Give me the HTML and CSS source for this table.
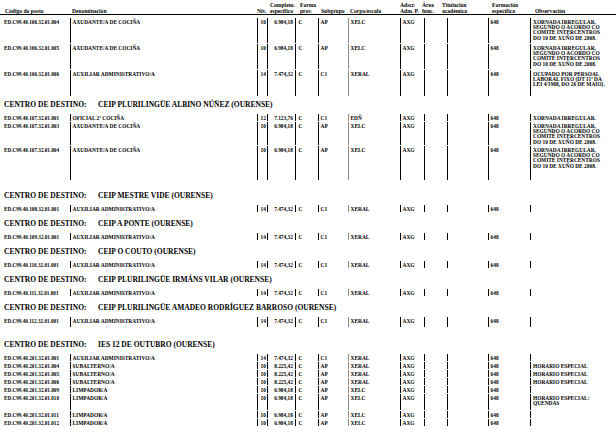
FILE: index.html
```html
<!DOCTYPE html>
<html lang="gl">
<head>
<meta charset="utf-8">
<title>Postos</title>
<link rel="stylesheet" href="styles.css">
</head>
<body>
<div class="page">
  <div class="head">
    <div class="hc hc-code">Código do posto</div>
    <div class="hc">Denominación</div>
    <div class="hc">Niv.</div>
    <div class="hc">Complem.<br>específico</div>
    <div class="hc">Forma<br>prov.</div>
    <div class="hc">Subgrupo</div>
    <div class="hc">Corpo/escala</div>
    <div class="hc">Adscr.<br>Adm. P.</div>
    <div class="hc">Área<br>func.</div>
    <div class="hc">Titulación<br>académica</div>
    <div class="hc">Formación<br>específica</div>
    <div class="hc">Observación</div>
  </div>

  <div class="rows first">
    <div class="row h25">
      <div class="code">ED.C99.40.106.32.01.004</div><div class="c den">AXUDANTE/A DE COCIÑA</div><div class="c niv">10</div><div class="c comp">6.984,18</div><div class="c forma">C</div><div class="c sub">AP</div><div class="c corpo">XELC</div><div class="c">AXG</div><div class="c"></div><div class="c"></div><div class="c">648</div><div class="c obs">XORNADA IRREGULAR,<br>SEGUNDO O ACORDO CO<br>COMITÉ INTERCENTROS<br>DO 10 DE XUÑO DE 2008.</div>
    </div>
    <div class="row h25">
      <div class="code">ED.C99.40.106.32.01.005</div><div class="c den">AXUDANTE/A DE COCIÑA</div><div class="c niv">10</div><div class="c comp">6.984,18</div><div class="c forma">C</div><div class="c sub">AP</div><div class="c corpo">XELC</div><div class="c">AXG</div><div class="c"></div><div class="c"></div><div class="c">648</div><div class="c obs">XORNADA IRREGULAR,<br>SEGUNDO O ACORDO CO<br>COMITÉ INTERCENTROS<br>DO 10 DE XUÑO DE 2008.</div>
    </div>
    <div class="row h26">
      <div class="code">ED.C99.40.106.32.01.006</div><div class="c den">AUXILIAR ADMINISTRATIVO/A</div><div class="c niv">14</div><div class="c comp">7.474,32</div><div class="c forma">C</div><div class="c sub">C1</div><div class="c corpo">XERAL</div><div class="c">AXG</div><div class="c"></div><div class="c"></div><div class="c">648</div><div class="c obs">OCUPADO POR PERSOAL<br>LABORAL FIXO (DT 11ª DA<br>LEI 4/1988, DO 26 DE MAIO).</div>
    </div>
  </div>

  <h2 class="centro mt3"><span class="lbl">CENTRO DE DESTINO:</span>CEIP PLURILINGÜE ALBINO NÚÑEZ (OURENSE)</h2>
  <div class="rows">
    <div class="row h7">
      <div class="code">ED.C99.40.107.32.01.001</div><div class="c den">OFICIAL 2ª COCIÑA</div><div class="c niv">12</div><div class="c comp">7.123,76</div><div class="c forma">C</div><div class="c sub">C1</div><div class="c corpo">EDÑ</div><div class="c">AXG</div><div class="c"></div><div class="c"></div><div class="c">648</div><div class="c obs">XORNADA IRREGULAR.</div>
    </div>
    <div class="row h23">
      <div class="code">ED.C99.40.107.32.01.003</div><div class="c den">AXUDANTE/A DE COCIÑA</div><div class="c niv">10</div><div class="c comp">6.984,18</div><div class="c forma">C</div><div class="c sub">AP</div><div class="c corpo">XELC</div><div class="c">AXG</div><div class="c"></div><div class="c"></div><div class="c">648</div><div class="c obs">XORNADA IRREGULAR,<br>SEGUNDO O ACORDO CO<br>COMITÉ INTERCENTROS<br>DO 10 DE XUÑO DE 2008.</div>
    </div>
    <div class="row h34">
      <div class="code">ED.C99.40.107.32.01.004</div><div class="c den">AXUDANTE/A DE COCIÑA</div><div class="c niv">10</div><div class="c comp">6.984,18</div><div class="c forma">C</div><div class="c sub">AP</div><div class="c corpo">XELC</div><div class="c">AXG</div><div class="c"></div><div class="c"></div><div class="c">648</div><div class="c obs">XORNADA IRREGULAR,<br>SEGUNDO O ACORDO CO<br>COMITÉ INTERCENTROS<br>DO 10 DE XUÑO DE 2008.</div>
    </div>
  </div>

  <h2 class="centro mt10"><span class="lbl">CENTRO DE DESTINO:</span>CEIP MESTRE VIDE (OURENSE)</h2>
  <div class="rows">
    <div class="row h7">
      <div class="code">ED.C99.40.108.32.01.001</div><div class="c den">AUXILIAR ADMINISTRATIVO/A</div><div class="c niv">14</div><div class="c comp">7.474,32</div><div class="c forma">C</div><div class="c sub">C1</div><div class="c corpo">XERAL</div><div class="c">AXG</div><div class="c"></div><div class="c"></div><div class="c">648</div><div class="c obs"></div>
    </div>
  </div>

  <h2 class="centro"><span class="lbl">CENTRO DE DESTINO:</span>CEIP A PONTE (OURENSE)</h2>
  <div class="rows">
    <div class="row h7">
      <div class="code">ED.C99.40.109.32.01.001</div><div class="c den">AUXILIAR ADMINISTRATIVO/A</div><div class="c niv">14</div><div class="c comp">7.474,32</div><div class="c forma">C</div><div class="c sub">C1</div><div class="c corpo">XERAL</div><div class="c">AXG</div><div class="c"></div><div class="c"></div><div class="c">648</div><div class="c obs"></div>
    </div>
  </div>

  <h2 class="centro"><span class="lbl">CENTRO DE DESTINO:</span>CEIP O COUTO (OURENSE)</h2>
  <div class="rows">
    <div class="row h7">
      <div class="code">ED.C99.40.110.32.01.001</div><div class="c den">AUXILIAR ADMINISTRATIVO/A</div><div class="c niv">14</div><div class="c comp">7.474,32</div><div class="c forma">C</div><div class="c sub">C1</div><div class="c corpo">XERAL</div><div class="c">AXG</div><div class="c"></div><div class="c"></div><div class="c">648</div><div class="c obs"></div>
    </div>
  </div>

  <h2 class="centro"><span class="lbl">CENTRO DE DESTINO:</span>CEIP PLURILINGÜE IRMÁNS VILAR (OURENSE)</h2>
  <div class="rows">
    <div class="row h7">
      <div class="code">ED.C99.40.111.32.01.001</div><div class="c den">AUXILIAR ADMINISTRATIVO/A</div><div class="c niv">14</div><div class="c comp">7.474,32</div><div class="c forma">C</div><div class="c sub">C1</div><div class="c corpo">XERAL</div><div class="c">AXG</div><div class="c"></div><div class="c"></div><div class="c">648</div><div class="c obs"></div>
    </div>
  </div>

  <h2 class="centro"><span class="lbl">CENTRO DE DESTINO:</span>CEIP PLURILINGÜE AMADEO RODRÍGUEZ BARROSO (OURENSE)</h2>
  <div class="rows">
    <div class="row h10">
      <div class="code">ED.C99.40.112.32.01.001</div><div class="c den">AUXILIAR ADMINISTRATIVO/A</div><div class="c niv">14</div><div class="c comp">7.474,32</div><div class="c forma">C</div><div class="c sub">C1</div><div class="c corpo">XERAL</div><div class="c">AXG</div><div class="c"></div><div class="c"></div><div class="c">648</div><div class="c obs"></div>
    </div>
  </div>

  <h2 class="centro mt12"><span class="lbl">CENTRO DE DESTINO:</span>IES 12 DE OUTUBRO (OURENSE)</h2>
  <div class="rows">
    <div class="row h7">
      <div class="code">ED.C99.40.201.32.01.001</div><div class="c den">AUXILIAR ADMINISTRATIVO/A</div><div class="c niv">14</div><div class="c comp">7.474,32</div><div class="c forma">C</div><div class="c sub">C1</div><div class="c corpo">XERAL</div><div class="c">AXG</div><div class="c"></div><div class="c"></div><div class="c">648</div><div class="c obs"></div>
    </div>
    <div class="row h7">
      <div class="code">ED.C99.40.201.32.01.004</div><div class="c den">SUBALTERNO/A</div><div class="c niv">10</div><div class="c comp">8.225,42</div><div class="c forma">C</div><div class="c sub">AP</div><div class="c corpo">XERAL</div><div class="c">AXG</div><div class="c"></div><div class="c"></div><div class="c">648</div><div class="c obs">HORARIO ESPECIAL</div>
    </div>
    <div class="row h7">
      <div class="code">ED.C99.40.201.32.01.005</div><div class="c den">SUBALTERNO/A</div><div class="c niv">10</div><div class="c comp">8.225,42</div><div class="c forma">C</div><div class="c sub">AP</div><div class="c corpo">XERAL</div><div class="c">AXG</div><div class="c"></div><div class="c"></div><div class="c">648</div><div class="c obs">HORARIO ESPECIAL</div>
    </div>
    <div class="row h7">
      <div class="code">ED.C99.40.201.32.01.006</div><div class="c den">SUBALTERNO/A</div><div class="c niv">10</div><div class="c comp">8.225,42</div><div class="c forma">C</div><div class="c sub">AP</div><div class="c corpo">XERAL</div><div class="c">AXG</div><div class="c"></div><div class="c"></div><div class="c">648</div><div class="c obs">HORARIO ESPECIAL</div>
    </div>
    <div class="row h7">
      <div class="code">ED.C99.40.201.32.01.009</div><div class="c den">LIMPADOR/A</div><div class="c niv">10</div><div class="c comp">6.984,18</div><div class="c forma">C</div><div class="c sub">AP</div><div class="c corpo">XELC</div><div class="c">AXG</div><div class="c"></div><div class="c"></div><div class="c">648</div><div class="c obs"></div>
    </div>
    <div class="row h16">
      <div class="code">ED.C99.40.201.32.01.010</div><div class="c den">LIMPADOR/A</div><div class="c niv">10</div><div class="c comp">6.984,18</div><div class="c forma">C</div><div class="c sub">AP</div><div class="c corpo">XELC</div><div class="c">AXG</div><div class="c"></div><div class="c"></div><div class="c">648</div><div class="c obs">HORARIO ESPECIAL:<br>QUENDAS</div>
    </div>
    <div class="row h7">
      <div class="code">ED.C99.40.201.32.01.011</div><div class="c den">LIMPADOR/A</div><div class="c niv">10</div><div class="c comp">6.984,18</div><div class="c forma">C</div><div class="c sub">AP</div><div class="c corpo">XELC</div><div class="c">AXG</div><div class="c"></div><div class="c"></div><div class="c">648</div><div class="c obs"></div>
    </div>
    <div class="row h7">
      <div class="code">ED.C99.40.201.32.01.012</div><div class="c den">LIMPADOR/A</div><div class="c niv">10</div><div class="c comp">6.984,18</div><div class="c forma">C</div><div class="c sub">AP</div><div class="c corpo">XELC</div><div class="c">AXG</div><div class="c"></div><div class="c"></div><div class="c">648</div><div class="c obs"></div>
    </div>
  </div>
</div>
</body>
</html>
```
FILE: styles.css
```css
* { box-sizing: border-box; margin: 0; padding: 0; }
html, body { background: #fff; }
body {
  margin: 0;
  color: #000;
  font-family: "Liberation Serif", "DejaVu Serif", "Times New Roman", serif;
  font-weight: bold;
}
.page {
  width: 616px;
  height: 439px;
  overflow: hidden;
  display: flex;
  flex-direction: column;
}
.head {
  flex: none;
  display: grid;
  grid-template-columns: 72px 185px 13px 30px 21px 29px 50px 22px 20px 50px 43px 81px;
  align-items: end;
  height: 15px;
  padding-top: 1px;
  border-bottom: 1px solid #000;
  font-size: 5.6px;
  line-height: 6px;
}
.hc { white-space: nowrap; }
.hc-code { padding-left: 5px; }
.rows { flex: none; display: flex; flex-direction: column; }
.rows.first { margin-top: 3px; }
.row {
  flex: none;
  display: grid;
  grid-template-columns: 70px 187px 10px 28px 23px 30px 52px 24px 23px 41px 42px 86px;
  margin-bottom: 1px;
  font-size: 5.4px;
  line-height: 5.4px;
  white-space: nowrap;
}
.row > div { padding-top: 1.5px; padding-left: 1.5px; }
.row > .code { padding-left: 4px; font-size: 5.2px; }
.c { border-left: 1px solid #000; }
.c.niv { padding-left: 2.5px; }
.c.comp { text-align: right; padding-right: 2px; }
.c.forma { padding-left: 2.5px; }
.c.corpo { border-left-color: #8a8a8a; }
.c.obs { border-left-width: 1.5px; padding-left: 2px; }
.h7 { height: 7px; }
.h10 { height: 10px; }
.h16 { height: 16px; }
.h23 { height: 23px; }
.h25 { height: 25px; }
.h26 { height: 26px; }
.h34 { height: 34px; }
.centro {
  flex: none;
  margin-top: 6px;
  margin-bottom: 4px;
  padding-left: 4px;
  height: 10px;
  font-size: 7.5px;
  line-height: 10px;
  font-weight: bold;
  white-space: nowrap;
}
.centro .lbl { display: inline-block; width: 94px; }
.mt3 { margin-top: 3px; }
.mt10 { margin-top: 10px; }
.mt12 { margin-top: 12px; }
```
